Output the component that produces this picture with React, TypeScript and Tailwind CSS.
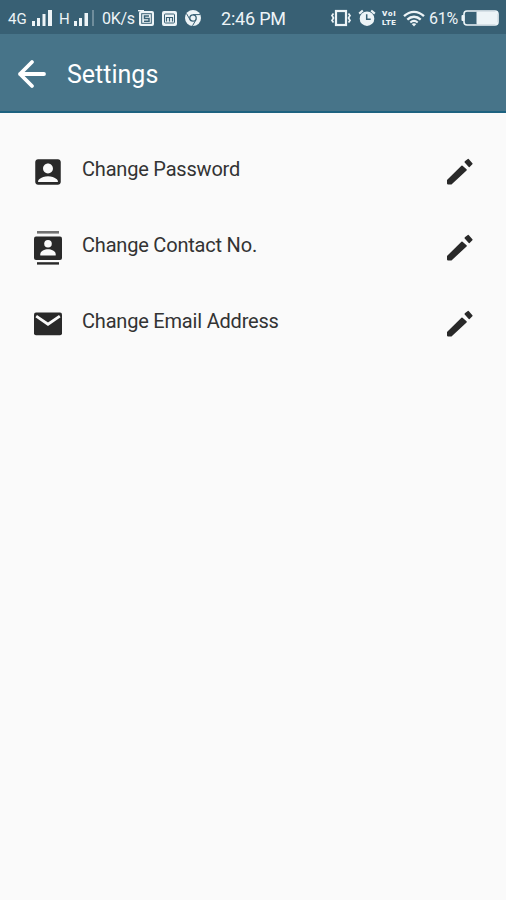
import type { ComponentType, ReactNode } from "react";
import { MdAccountBox } from "react-icons/md";

const items: { label: string; icon: ComponentType }[] = [
  { label: "Change Password", icon: Account },
  { label: "Change Contact No.", icon: Contacts },
  { label: "Change Email Address", icon: Mail },
];

function Account() {
  return <MdAccountBox size={34} />;
}

function Contacts() {
  return (
    <svg width="34" height="34" viewBox="0 0 34 34" fill="currentColor">
      <rect x="6" y="0" width="22" height="2.6" opacity="0.65" />
      <rect x="3" y="5.5" width="28" height="23.5" rx="2" />
      <rect x="6" y="31.2" width="22" height="2.4" />
      <circle cx="17" cy="12.7" r="3.8" fill="#fafafa" />
      <path
        d="M9.3 24.5v-1.3c0-3.2 4.5-5 7.7-5s7.7 1.8 7.7 5v1.3z"
        fill="#fafafa"
      />
    </svg>
  );
}

function Mail() {
  return (
    <svg width="34" height="34" viewBox="0 0 34 34" fill="none">
      <rect x="3" y="5.5" width="28" height="22.8" rx="2" fill="currentColor" />
      <path
        d="m5.2 9.2 11.8 8 11.8-8"
        stroke="#fafafa"
        strokeWidth="2.8"
      />
    </svg>
  );
}

function Pencil() {
  return (
    <svg
      width="34"
      height="34"
      viewBox="0 0 34 34"
      fill="currentColor"
      stroke="currentColor"
      strokeWidth="1.6"
      strokeLinejoin="round"
    >
      <path d="M4.8 28.6v-3.4L19 11.3l4 3.6L8.2 28.6z" />
      <path d="m22.3 7 3-2.3 3.5 4-2.7 2.6z" />
    </svg>
  );
}

function Signal({ weak = false }: { weak?: boolean }) {
  return (
    <svg width="22" height="16" viewBox="0 0 22 16" fill="currentColor">
      <rect x="0" y="11" width="3" height="5" />
      <rect x="5" y="8" width="3" height="8" />
      {weak ? (
        <>
          <rect x="10.5" y="3" width="3.5" height="13" />
          <rect x="18" y="0" width="2" height="16" opacity="0.3" />
        </>
      ) : (
        <>
          <rect x="10.5" y="4" width="3" height="12" />
          <rect x="16" y="0" width="4" height="16" />
        </>
      )}
    </svg>
  );
}

function AppBadge({ children }: { children: ReactNode }) {
  return (
    <svg width="17" height="17" viewBox="0 0 17 17" fill="none">
      <rect x="1" y="1" width="15" height="15" rx="2" fill="currentColor" />
      {children}
    </svg>
  );
}

function Chrome() {
  return (
    <svg width="18" height="18" viewBox="0 0 18 18" fill="none">
      <circle cx="9" cy="9" r="8" fill="currentColor" />
      <circle cx="9" cy="9" r="3.2" stroke="#386074" strokeWidth="1.3" />
      <path
        d="M9 5.6h7.2M6 10.7 2.5 4.6M12 10.7l-3.5 6.1"
        stroke="#386074"
        strokeWidth="1"
      />
    </svg>
  );
}

function Vibrate() {
  return (
    <svg
      width="22"
      height="18"
      viewBox="0 0 22 18"
      fill="none"
      stroke="currentColor"
    >
      <rect x="6" y="2" width="10" height="14" strokeWidth="2.2" />
      <path
        d="M3.5 4.5 2 6.5 3.5 9 2 11.5l1.5 2M18.5 4.5l1.5 2L18.5 9l1.5 2.5-1.5 2"
        strokeWidth="1.7"
      />
    </svg>
  );
}

function Alarm() {
  return (
    <svg width="18" height="18" viewBox="0 0 18 18" fill="none">
      <circle cx="9" cy="9.7" r="7.3" fill="currentColor" />
      <path
        d="M1.2 4.6 4.8 1.5M16.8 4.6l-3.6-3.1"
        stroke="currentColor"
        strokeWidth="2.2"
      />
      <path d="M8.7 5.2v5h4" stroke="#386074" strokeWidth="1.5" />
    </svg>
  );
}

function Wifi() {
  return (
    <svg
      width="22"
      height="17"
      viewBox="0 0 22 17"
      fill="none"
      stroke="currentColor"
    >
      <path d="M1 6.2C7 .4 15 .4 21 6.2" strokeWidth="2.3" />
      <path d="M4.3 9.6c4-3.8 9.4-3.8 13.4 0" strokeWidth="2.3" />
      <path d="M7.3 12.6c2.2-2 5.2-2 7.4 0" strokeWidth="2" />
      <path
        d="m11 16.5-2.3-2.4c1.4-1 3.2-1 4.6 0z"
        fill="currentColor"
        stroke="none"
      />
    </svg>
  );
}

function Battery() {
  return (
    <svg width="39" height="17" viewBox="0 0 39 17" fill="none">
      <rect x="0.5" y="5" width="3" height="6" rx="1" fill="currentColor" />
      <rect
        x="3"
        y="1"
        width="34"
        height="14"
        rx="3"
        stroke="currentColor"
        strokeWidth="1.6"
      />
      <rect x="15.5" y="1.5" width="21" height="13" rx="1" fill="currentColor" />
    </svg>
  );
}

function StatusBar() {
  return (
    <div className="flex h-[34px] items-center bg-[#386074] pt-0.5 pl-2 leading-none whitespace-nowrap text-[#edf4f7]">
      <span className="w-6 pt-0.5 text-[15px]">4G</span>
      <Signal />
      <span className="ml-[5px] w-[15px] pt-0.5 text-[15px]">H</span>
      <Signal weak />
      <span className="ml-1.5 w-9 pt-px text-base leading-none tracking-[-0.3px]">
        0K/s
      </span>
      <AppBadge>
        <path d="M0 .7h6" stroke="currentColor" strokeWidth="1.4" />
        <rect x="3.7" y="3.7" width="9.6" height="9.6" stroke="#386074" />
        <path
          d="M11 6H6.5v2.6H11v2.6H6"
          stroke="#386074"
          strokeWidth="1.5"
        />
      </AppBadge>
      <div className="ml-1.5 flex">
        <AppBadge>
          <rect x="3.5" y="4" width="10" height="9" rx="1" stroke="#386074" />
          <path
            d="M5.5 11.5v-4h6v4M8.5 7.5v4"
            stroke="#386074"
            strokeWidth="1.2"
          />
        </AppBadge>
      </div>
      <div className="ml-1.5 flex">
        <Chrome />
      </div>
      <span className="ml-[19px] w-[109px] pt-px text-lg leading-none tracking-[-0.2px]">
        2:46 PM
      </span>
      <Vibrate />
      <div className="ml-1.5 flex w-6">
        <Alarm />
      </div>
      <div className="flex w-[21px] flex-col text-[8px] leading-[9px] font-black">
        <span className="tracking-[0.8px]">VoI</span>
        <span className="tracking-[0.3px]">LTE</span>
      </div>
      <Wifi />
      <span className="ml-1 w-8 pt-px text-base leading-none tracking-[-0.3px]">
        61%
      </span>
      <Battery />
    </div>
  );
}

function Header() {
  return (
    <header className="flex h-[79px] items-center border-b-2 border-[#1d6280] bg-[#477489] pt-0.5 pl-[17px] text-white">
      <svg
        width="30"
        height="30"
        viewBox="0 0 30 30"
        fill="none"
        stroke="currentColor"
        strokeWidth="3.8"
        strokeLinecap="round"
        strokeLinejoin="round"
      >
        <path d="M27 15H3M15 3 3 15l12 12" />
      </svg>
      <h1 className="ml-5 pt-0.5 text-[25px] leading-none">Settings</h1>
    </header>
  );
}

export default function App() {
  return (
    <div className="min-h-screen bg-[#fafafa] font-['Roboto',sans-serif]">
      <StatusBar />
      <Header />
      <ul className="pt-[21px]">
        {items.map(({ label, icon: Icon }) => (
          <li
            key={label}
            className="flex h-[76px] items-center pr-[29px] pl-[31px] text-[#292929]"
          >
            <Icon />
            <span className="mb-1.5 ml-[17px] text-xl leading-none tracking-[-0.2px] text-[#333]">
              {label}
            </span>
            <button className="ml-auto" aria-label={label}>
              <Pencil />
            </button>
          </li>
        ))}
      </ul>
    </div>
  );
}
